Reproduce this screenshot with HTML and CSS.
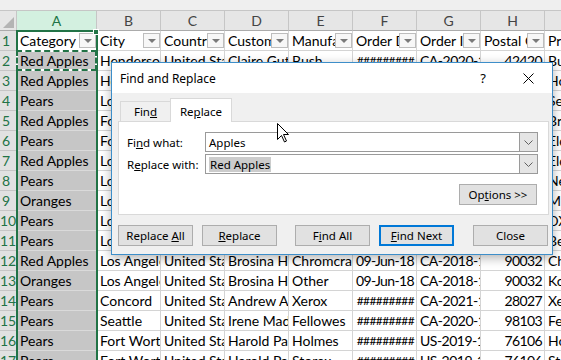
FILE: index.html
```html
<!DOCTYPE html>
<html lang="en">

<head>
  <meta charset="UTF-8" />
  <meta name="viewport" content="width=device-width, initial-scale=1.0" />
  <title>Find and Replace</title>
  <link rel="stylesheet" href="styles.css">
</head>

<body>
  <div class="formula-edge"></div>
  <div class="sheet-view">
  <div class="sheet">
    <div class="corner"></div>
    <div class="col-head sel">A</div>
    <div class="col-head">B</div>
    <div class="col-head">C</div>
    <div class="col-head">D</div>
    <div class="col-head">E</div>
    <div class="col-head">F</div>
    <div class="col-head">G</div>
    <div class="col-head">H</div>
    <div class="col-head">I</div>

    <div class="row-head">1</div>
    <div class="cell hdr active"><span>Category</span><i class="filter"></i></div>
    <div class="cell hdr"><span>City</span><i class="filter"></i></div>
    <div class="cell hdr"><span>Country</span><i class="filter"></i></div>
    <div class="cell hdr"><span>Customer Name</span><i class="filter"></i></div>
    <div class="cell hdr"><span>Manufacturer</span><i class="filter"></i></div>
    <div class="cell hdr"><span>Order Date</span><i class="filter"></i></div>
    <div class="cell hdr"><span>Order ID</span><i class="filter"></i></div>
    <div class="cell hdr"><span>Postal Code</span><i class="filter"></i></div>
    <div class="cell hdr"><span>Product Name</span><i class="filter"></i></div>

    <div class="row-head">2</div>
    <div class="cell a copy">Red Apples</div>
    <div class="cell">Henderson</div>
    <div class="cell">United States</div>
    <div class="cell">Claire Gute</div>
    <div class="cell">Bush</div>
    <div class="cell hash">#########</div>
    <div class="cell id">CA-2020-152156</div>
    <div class="cell num">42420</div>
    <div class="cell">Bush Somerset Collection Bookcase</div>

    <div class="row-head">3</div>
    <div class="cell a">Red Apples</div>
    <div class="cell">Henderson</div>
    <div class="cell">United States</div>
    <div class="cell">Claire Gute</div>
    <div class="cell">Hon</div>
    <div class="cell hash">#########</div>
    <div class="cell id">CA-2020-152156</div>
    <div class="cell num">42420</div>
    <div class="cell">Hon Deluxe Fabric Upholstered Stacking Chairs</div>

    <div class="row-head">4</div>
    <div class="cell a">Pears</div>
    <div class="cell">Los Angeles</div>
    <div class="cell">United States</div>
    <div class="cell">Darrin Van Huff</div>
    <div class="cell">Avery</div>
    <div class="cell num">12-Jun-19</div>
    <div class="cell id">CA-2020-138688</div>
    <div class="cell num">90036</div>
    <div class="cell">Self-Adhesive Address Labels</div>

    <div class="row-head">5</div>
    <div class="cell a">Red Apples</div>
    <div class="cell">Fort Lauderdale</div>
    <div class="cell">United States</div>
    <div class="cell">Sean O'Donnell</div>
    <div class="cell">Bretford</div>
    <div class="cell hash">#########</div>
    <div class="cell id">US-2019-108966</div>
    <div class="cell num">33311</div>
    <div class="cell">Bretford CR4500 Series Slim Table</div>

    <div class="row-head">6</div>
    <div class="cell a">Pears</div>
    <div class="cell">Fort Lauderdale</div>
    <div class="cell">United States</div>
    <div class="cell">Sean O'Donnell</div>
    <div class="cell">Eldon</div>
    <div class="cell hash">#########</div>
    <div class="cell id">US-2019-108966</div>
    <div class="cell num">33311</div>
    <div class="cell">Eldon Fold 'N Roll Cart System</div>

    <div class="row-head">7</div>
    <div class="cell a">Red Apples</div>
    <div class="cell">Los Angeles</div>
    <div class="cell">United States</div>
    <div class="cell">Brosina Hoffman</div>
    <div class="cell">Eldon</div>
    <div class="cell num">09-Jun-18</div>
    <div class="cell id">CA-2018-115812</div>
    <div class="cell num">90032</div>
    <div class="cell">Eldon Expressions Desk Accessories</div>

    <div class="row-head">8</div>
    <div class="cell a">Pears</div>
    <div class="cell">Los Angeles</div>
    <div class="cell">United States</div>
    <div class="cell">Brosina Hoffman</div>
    <div class="cell">Newell</div>
    <div class="cell num">09-Jun-18</div>
    <div class="cell id">CA-2018-115812</div>
    <div class="cell num">90032</div>
    <div class="cell">Newell 322</div>

    <div class="row-head">9</div>
    <div class="cell a">Oranges</div>
    <div class="cell">Los Angeles</div>
    <div class="cell">United States</div>
    <div class="cell">Brosina Hoffman</div>
    <div class="cell">Mitel</div>
    <div class="cell num">09-Jun-18</div>
    <div class="cell id">CA-2018-115812</div>
    <div class="cell num">90032</div>
    <div class="cell">Mitel 5320 IP Phone</div>

    <div class="row-head">10</div>
    <div class="cell a">Pears</div>
    <div class="cell">Los Angeles</div>
    <div class="cell">United States</div>
    <div class="cell">Brosina Hoffman</div>
    <div class="cell">DXL</div>
    <div class="cell num">09-Jun-18</div>
    <div class="cell id">CA-2018-115812</div>
    <div class="cell num">90032</div>
    <div class="cell">DXL Angle-View Binders</div>

    <div class="row-head">11</div>
    <div class="cell a">Pears</div>
    <div class="cell">Los Angeles</div>
    <div class="cell">United States</div>
    <div class="cell">Brosina Hoffman</div>
    <div class="cell">Belkin</div>
    <div class="cell num">09-Jun-18</div>
    <div class="cell id">CA-2018-115812</div>
    <div class="cell num">90032</div>
    <div class="cell">Belkin F5C206VTEL</div>

    <div class="row-head">12</div>
    <div class="cell a">Red Apples</div>
    <div class="cell">Los Angeles</div>
    <div class="cell">United States</div>
    <div class="cell">Brosina Hoffman</div>
    <div class="cell">Chromcraft</div>
    <div class="cell num">09-Jun-18</div>
    <div class="cell id">CA-2018-115812</div>
    <div class="cell num">90032</div>
    <div class="cell">Chromcraft Rectangular Conference Tables</div>

    <div class="row-head">13</div>
    <div class="cell a">Oranges</div>
    <div class="cell">Los Angeles</div>
    <div class="cell">United States</div>
    <div class="cell">Brosina Hoffman</div>
    <div class="cell">Other</div>
    <div class="cell num">09-Jun-18</div>
    <div class="cell id">CA-2018-115812</div>
    <div class="cell num">90032</div>
    <div class="cell">Konftel 250 Conference phone</div>

    <div class="row-head">14</div>
    <div class="cell a">Pears</div>
    <div class="cell">Concord</div>
    <div class="cell">United States</div>
    <div class="cell">Andrew Allen</div>
    <div class="cell">Xerox</div>
    <div class="cell hash">#########</div>
    <div class="cell id">CA-2021-114412</div>
    <div class="cell num">28027</div>
    <div class="cell">Xerox 1967</div>

    <div class="row-head">15</div>
    <div class="cell a">Pears</div>
    <div class="cell">Seattle</div>
    <div class="cell">United States</div>
    <div class="cell">Irene Maddox</div>
    <div class="cell">Fellowes</div>
    <div class="cell hash">#########</div>
    <div class="cell id">CA-2020-161389</div>
    <div class="cell num">98103</div>
    <div class="cell">Fellowes PB200 Plastic Comb Binding</div>

    <div class="row-head">16</div>
    <div class="cell a">Pears</div>
    <div class="cell">Fort Worth</div>
    <div class="cell">United States</div>
    <div class="cell">Harold Pawlan</div>
    <div class="cell">Holmes</div>
    <div class="cell hash">#########</div>
    <div class="cell id">US-2019-118983</div>
    <div class="cell num">76106</div>
    <div class="cell">Holmes Replacement Filter</div>

    <div class="row-head">17</div>
    <div class="cell a">Pears</div>
    <div class="cell">Fort Worth</div>
    <div class="cell">United States</div>
    <div class="cell">Harold Pawlan</div>
    <div class="cell">Storex</div>
    <div class="cell hash">#########</div>
    <div class="cell id">US-2019-118983</div>
    <div class="cell num">76106</div>
    <div class="cell">Storex DuraTech Binders</div>
  </div>
  </div>

  <!-- column A selection frame -->
  <div class="selection"></div>

  <div class="dialog">
    <div class="dlg-title">
      <span class="dlg-caption">Find and Replace</span>
      <span class="dlg-help">?</span>
      <svg class="dlg-close" width="11" height="11" viewBox="0 0 11 11">
        <path d="M0.5 0.5 L10.5 10.5 M10.5 0.5 L0.5 10.5" stroke="#000" stroke-width="1" fill="none" />
      </svg>
    </div>
    <div class="dlg-body">
      <div class="tabs">
        <div class="tab">Fin<u>d</u></div>
        <div class="tab active">Re<u>p</u>lace</div>
      </div>
      <div class="tab-panel">
        <div class="field">
          <label>Fi<u>n</u>d what:</label>
          <div class="combo">
            <span class="combo-text">Apples</span>
            <span class="combo-btn">
              <svg width="9" height="5" viewBox="0 0 9 5"><path d="M0.5 0.5 L4.5 4.5 L8.5 0.5" stroke="#606060" fill="none" /></svg>
            </span>
          </div>
        </div>
        <div class="field">
          <label>R<u>e</u>place with:</label>
          <div class="combo">
            <span class="combo-text"><span class="picked">Red Apples</span></span>
            <span class="combo-btn">
              <svg width="9" height="5" viewBox="0 0 9 5"><path d="M0.5 0.5 L4.5 4.5 L8.5 0.5" stroke="#606060" fill="none" /></svg>
            </span>
          </div>
        </div>
        <div class="options-row">
          <button class="btn options">Op<u>t</u>ions &gt;&gt;</button>
        </div>
      </div>
      <div class="actions">
        <button class="btn">Replace <u>A</u>ll</button>
        <button class="btn replace"><u>R</u>eplace</button>
        <button class="btn find-all">F<u>i</u>nd All</button>
        <button class="btn find-next"><u>F</u>ind Next</button>
        <button class="btn close">Close</button>
      </div>
    </div>
  </div>

  <svg class="cursor" width="13" height="20" viewBox="0 0 13 20">
    <path d="M0.5 0.5 V16.5 L4.5 12.5 L7.5 19 L9.5 18 L6.5 11.5 H11.5 Z" fill="#fff" stroke="#000" stroke-linejoin="miter" />
  </svg>
</body>

</html>
```

FILE: styles.css
```css
body {
  margin: 0;
  width: 561px;
  height: 360px;
  overflow: hidden;
  position: relative;
  background: #fff;
  font-family: Lato, "Liberation Sans", sans-serif;
  color: #000;
}
.formula-edge {
  height: 11px;
  background: #efefef;
  border-bottom: 1px solid #c6c6c6;
  box-sizing: border-box;
}
.sheet-view {
  width: 561px;
  height: 349px;
  overflow: hidden;
}
.sheet {
  display: grid;
  grid-template-columns: 17px 80px repeat(8, 64px);
  grid-auto-rows: 20px;
  width: 609px;
  font-size: 14px;
}
.corner {
  background: #e6e6e6;
  border-right: 1px solid #c6c6c6;
  border-bottom: 1px solid #ababab;
  position: relative;
}
.corner::after {
  content: "";
  position: absolute;
  right: 2px;
  bottom: 2px;
  border-left: 11px solid transparent;
  border-bottom: 11px solid #b4b4b4;
}
.col-head {
  background: #e6e6e6;
  border-right: 1px solid #c6c6c6;
  border-bottom: 1px solid #ababab;
  text-align: center;
  line-height: 19px;
  color: #444;
}
.col-head.sel {
  background: #d3f0e0;
  color: #217346;
}
.row-head {
  background: #e1e1e1;
  color: #217346;
  border-right: 1px solid #ababab;
  border-bottom: 1px solid #c6c6c6;
  line-height: 19px;
  text-align: center;
  padding-right: 4px;
  overflow: hidden;
  white-space: nowrap;
}
.cell {
  border-right: 1px solid #d4d4d4;
  border-bottom: 1px solid #d4d4d4;
  overflow: hidden;
  white-space: nowrap;
  padding: 0 2px 0 3px;
  line-height: 19px;
  min-width: 0;
}
.cell.num {
  text-align: right;
  letter-spacing: -0.6px;
}
.cell.hash {
  text-align: right;
  font-size: 12px;
  letter-spacing: -0.6px;
}
.cell.id {
  letter-spacing: -0.5px;
}
.cell.a {
  background: #c6c6c6;
  border-bottom-color: #dadada;
}
.cell.hdr {
  display: flex;
  align-items: center;
  padding-right: 0;
}
.cell.hdr span {
  flex: 1;
  min-width: 0;
  overflow: hidden;
}
.filter {
  flex: none;
  width: 17px;
  height: 15px;
  box-sizing: border-box;
  border: 1px solid #bdbdbd;
  background: #f7f7f7;
  position: relative;
}
.filter::after {
  content: "";
  position: absolute;
  left: 4px;
  top: 5px;
  border-left: 4px solid transparent;
  border-right: 4px solid transparent;
  border-top: 4px solid #7a7a7a;
}
.copy {
  position: relative;
  overflow: visible;
}
.copy::before,
.copy::after {
  content: "";
  position: absolute;
  left: -1px;
  top: -1px;
  right: -1px;
  bottom: -1px;
  border: 2px solid #fff;
  z-index: 2;
}
.copy::after {
  border: 2px dashed #217346;
}
.selection {
  position: absolute;
  left: 16px;
  top: 30px;
  width: 82px;
  bottom: 0;
  border: 2px solid #217346;
  border-bottom: none;
  box-sizing: border-box;
  z-index: 1;
}
.selection::after {
  content: "";
  position: absolute;
  right: -3px;
  top: -3px;
  width: 4px;
  height: 4px;
  background: #217346;
  border: 1px solid #fff;
}

/* dialog */
.dialog {
  position: absolute;
  left: 111px;
  top: 62px;
  width: 442px;
  height: 193px;
  box-sizing: border-box;
  border: 1px solid #3d8ec9;
  background: #f0f0f0;
  box-shadow: 0 3px 10px rgba(0, 0, 0, 0.3);
  font-family: "Noto Sans", sans-serif;
  font-size: 11.5px;
  z-index: 3;
}
.dlg-title {
  height: 30px;
  background: #fff;
  display: flex;
  align-items: center;
  padding-left: 8px;
}
.dlg-caption {
  font-size: 12px;
}
.dlg-help {
  margin-left: auto;
  width: 14px;
  text-align: center;
  font-size: 13px;
}
.dlg-close {
  margin: 0 18px 0 33px;
}
.dlg-body {
  padding: 5px 3px 0 6px;
}
.tabs {
  display: flex;
  align-items: flex-end;
  height: 23px;
  margin-left: 2px;
  position: relative;
  z-index: 1;
}
.tab {
  height: 20px;
  width: 50px;
  box-sizing: border-box;
  border: 1px solid #d9d9d9;
  border-bottom: none;
  border-right: none;
  text-align: center;
  line-height: 19px;
}
.tab.active {
  width: 62px;
  height: 24px;
  margin-bottom: -1px;
  background: #fff;
  border-right: 1px solid #d9d9d9;
  line-height: 25px;
}
.tab-panel {
  height: 94px;
  box-sizing: border-box;
  border: 1px solid #d9d9d9;
  background: #fff;
  padding: 10px 10px 0 8px;
}
.field {
  display: flex;
  align-items: center;
  height: 20px;
}
.field + .field {
  margin-top: 2px;
}
.field label {
  width: 78px;
  flex: none;
}
.combo {
  flex: 1;
  height: 20px;
  box-sizing: border-box;
  border: 1px solid #9a9a9a;
  display: flex;
  align-items: center;
}
.combo-text {
  flex: 1;
  padding-left: 3px;
}
.picked {
  background: #cccccc;
  padding: 0 1px;
}
.combo-btn {
  width: 17px;
  height: 18px;
  background: #e5e5e5;
  border-left: 1px solid #9a9a9a;
  display: flex;
  align-items: center;
  justify-content: center;
}
.options-row {
  display: flex;
  justify-content: flex-end;
  margin-top: 10px;
  padding-right: 1px;
}
.btn {
  width: 75px;
  height: 21px;
  box-sizing: border-box;
  background: #e1e1e1;
  border: 1px solid #adadad;
  font-family: inherit;
  font-size: 11.5px;
  color: #000;
  padding: 0;
}
.btn.options {
  width: 78px;
}
.actions {
  display: flex;
  margin-top: 10px;
}
.btn.replace {
  margin-left: 9px;
}
.btn.find-all {
  margin-left: 18px;
}
.btn.find-next {
  margin-left: 9px;
  border: 2px solid #0078d7;
}
.btn.close {
  margin-left: 19px;
}
.cursor {
  position: absolute;
  left: 277px;
  top: 123px;
  z-index: 4;
}
```
